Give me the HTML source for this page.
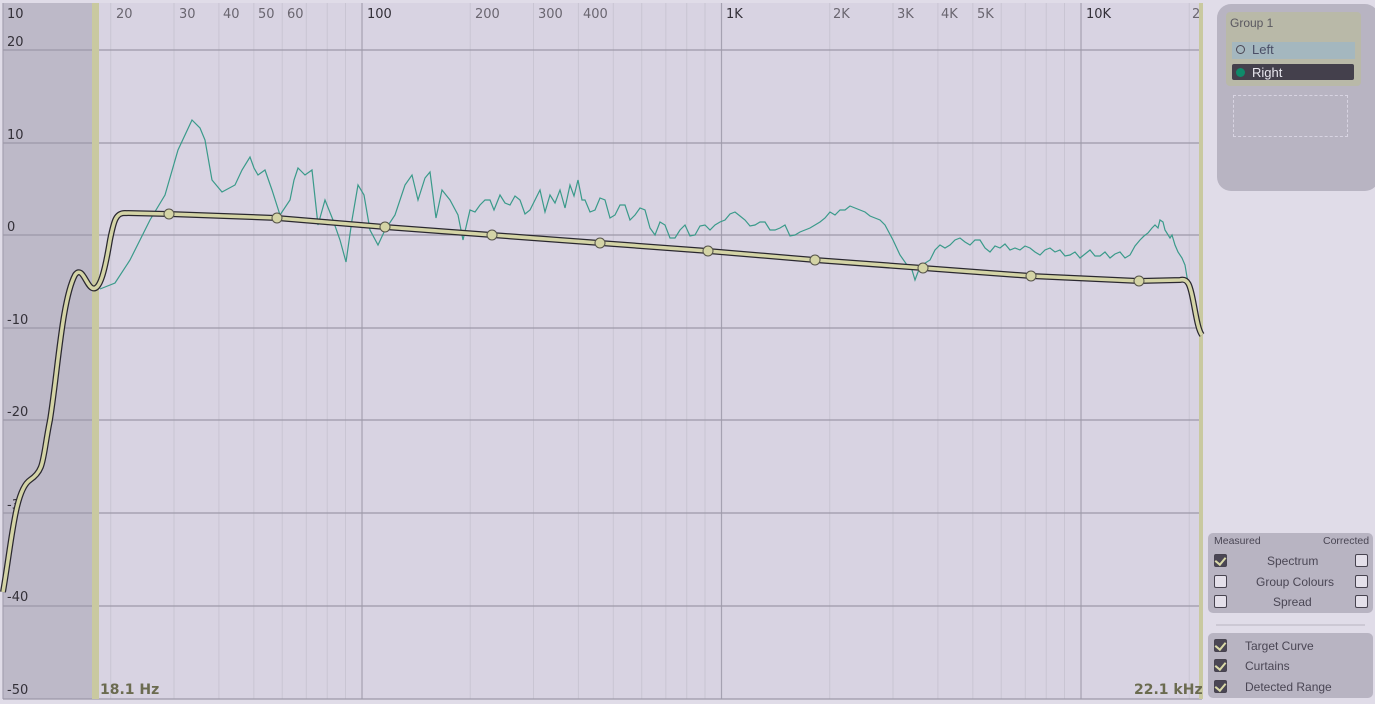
<!DOCTYPE html>
<html><head><meta charset="utf-8"><style>
body{margin:0;width:1375px;height:704px;background:#e0dce8;overflow:hidden;position:relative;font-family:"DejaVu Sans","Liberation Sans",sans-serif}
.p{position:absolute}
.cb{position:absolute;width:13px;height:13px;border:1px solid #47434f;background:#e4e0ea;border-radius:2px;box-sizing:border-box}
.cb.on{background:#4a4654}
.cb.on:after{content:"";position:absolute;left:2px;top:0px;width:5px;height:8px;border-right:2px solid #d9d9a8;border-bottom:2px solid #d9d9a8;transform:rotate(40deg)}
.t{position:absolute;font-size:12px;color:#4a4654;font-family:"Liberation Sans",sans-serif}
</style></head><body>
<svg class="p" style="left:0;top:0" width="1210" height="704">
<rect x="3" y="3" width="1199" height="696" fill="#d8d3e2"/>
<rect x="3" y="3" width="89" height="696" fill="#bdb9c8"/>
<g stroke="#c9c5d3" stroke-width="1">
<path d="M110.7 3V699M174 3V699M218.9 3V699M253.8 3V699M282.2 3V699M306.3 3V699M327.2 3V699M345.5 3V699M470.2 3V699M533.5 3V699M578.4 3V699M613.3 3V699M641.7 3V699M665.8 3V699M686.7 3V699M705 3V699M829.7 3V699M893 3V699M937.9 3V699M972.8 3V699M1001.2 3V699M1025.3 3V699M1046.2 3V699M1064.5 3V699M1189.2 3V699"/>
</g>
<g stroke="#a5a1b1" stroke-width="1.2"><path d="M362 3V699M721.5 3V699M1081 3V699M3 3V699"/></g>
<g stroke="#9d99a8" stroke-width="1.2"><path d="M3 50H1202M3 143H1202M3 235H1202M3 328H1202M3 420H1202M3 513H1202M3 606H1202M3 699H1202"/></g>
<rect x="92" y="3" width="7" height="696" fill="#c9c9a0"/>
<rect x="1199" y="3" width="4" height="696" fill="#c9c9a0"/>
<g font-size="13" fill="#6a6670">
<text x="116" y="18">20</text><text x="179" y="18">30</text><text x="223" y="18">40</text><text x="258" y="18">50</text><text x="287" y="18">60</text>
<text x="475" y="18">200</text><text x="538" y="18">300</text><text x="583" y="18">400</text>
<text x="833" y="18">2K</text><text x="897" y="18">3K</text><text x="941" y="18">4K</text><text x="977" y="18">5K</text><text x="1192" y="18">2</text>
</g>
<g font-size="13" fill="#333038">
<text x="7" y="18">10</text><text x="367" y="18">100</text><text x="726" y="18">1K</text><text x="1086" y="18">10K</text>
<text x="7" y="46">20</text><text x="7" y="139">10</text><text x="7" y="231">0</text><text x="7" y="324">-10</text><text x="7" y="416">-20</text><text x="7" y="509">-3</text><text x="7" y="601">-40</text><text x="7" y="694">-50</text>
</g>
<text x="100" y="694" font-size="14" font-weight="bold" fill="#6b6b50">18.1 Hz</text>
<text x="1134" y="694" font-size="14" font-weight="bold" fill="#6b6b50">22.1 kHz</text>
<polyline fill="none" stroke="#3a9a8a" stroke-width="1.2" points="100,289 115,283 130,260 150,220 165,195 178,150 192,120 200,128 205,140 212,180 222,192 235,185 242,170 250,157 254,168 258,175 265,170 272,190 280,215 290,200 294,180 298,168 305,175 312,170 318,225 325,200 333,220 340,240 346,262 352,220 358,185 364,195 370,230 378,245 385,230 395,215 405,185 412,175 418,200 425,178 430,172 436,218 442,190 450,200 458,215 463,240 470,210 475,212 480,205 485,200 490,200 494,210 500,195 505,203 510,205 515,196 520,200 525,214 530,210 535,200 540,190 545,212 550,195 555,203 560,190 565,208 570,185 574,196 578,180 582,200 585,200 590,212 595,210 600,198 605,200 610,218 615,215 620,205 625,205 630,220 635,215 640,208 645,210 650,228 655,235 660,222 665,225 670,238 675,238 680,230 685,225 690,236 695,235 700,226 705,225 710,230 715,225 720,222 725,220 730,214 735,212 740,216 745,220 750,226 755,225 760,222 765,222 770,230 775,230 780,228 785,225 790,236 795,235 800,232 805,230 810,228 815,225 820,222 825,218 830,212 835,215 840,210 845,210 850,206 855,208 860,210 865,212 870,216 875,218 880,220 885,225 893,240 900,255 907,265 912,270 915,280 918,272 922,265 930,260 935,250 940,245 945,248 950,245 955,240 960,238 965,242 970,245 975,240 980,240 985,248 990,252 995,246 1000,248 1005,244 1010,250 1015,248 1020,250 1025,246 1030,248 1035,252 1040,255 1045,250 1050,248 1055,252 1060,250 1065,256 1070,255 1075,252 1080,258 1085,254 1090,250 1095,256 1100,256 1105,252 1110,258 1115,254 1120,252 1125,258 1130,255 1135,246 1140,240 1144,236 1148,233 1152,228 1155,225 1158,228 1160,220 1163,222 1165,230 1170,238 1172,235 1175,245 1178,252 1182,258 1185,265 1190,295"/>
<path id="tc" fill="none" d="M3 592C12 540 15 490 30 480C45 470 42 460 50 420C58 370 62 300 75 275C82 265 86 285 92 288C100 292 105 270 110 240C114 220 116 213 125 213L169 214L277 218L385 227L492 235L600 243L708 251L815 260L923 268L1031 276L1139 281L1180 280C1188 278 1190 285 1193 300C1196 315 1198 330 1202 335"/>
<use href="#tc" stroke="#2a2830" stroke-width="6"/>
<use href="#tc" stroke="#d4d4a6" stroke-width="3.5"/>
<g fill="#d4d4a6" stroke="#55534a" stroke-width="1">
<circle cx="169" cy="214" r="5"/><circle cx="277" cy="218" r="5"/><circle cx="385" cy="227" r="5"/><circle cx="492" cy="235" r="5"/><circle cx="600" cy="243" r="5"/><circle cx="708" cy="251" r="5"/><circle cx="815" cy="260" r="5"/><circle cx="923" cy="268" r="5"/><circle cx="1031" cy="276" r="5"/><circle cx="1139" cy="281" r="5"/>
</g>
</svg>
<div class="p" style="left:1217px;top:4px;width:162px;height:187px;background:#b8b4c2;border-radius:14px"></div>
<div class="p" style="left:1226px;top:12px;width:135px;height:74px;background:#b9b9a8;border-radius:4px"></div>
<div class="t" style="left:1230px;top:16px;font-size:12px;color:#5a5860">Group 1</div>
<div class="p" style="left:1232px;top:42px;width:123px;height:17px;background:#a4b7bf"></div>
<div class="p" style="left:1236px;top:45px;width:7px;height:7px;border:1.5px solid #4a4654;border-radius:50%"></div>
<div class="t" style="left:1252px;top:42px;font-size:13px;color:#4a4e66">Left</div>
<div class="p" style="left:1232px;top:64px;width:122px;height:16px;background:#44404c;border-radius:2px"></div>
<div class="p" style="left:1236px;top:68px;width:9px;height:9px;background:#0f8a6a;border-radius:50%"></div>
<div class="t" style="left:1252px;top:65px;font-size:13px;color:#e8e6ee">Right</div>
<div class="p" style="left:1233px;top:95px;width:115px;height:42px;border:1.5px dashed #d8d4e2;box-sizing:border-box"></div>
<div class="p" style="left:1208px;top:533px;width:165px;height:80px;background:#b8b4c2;border-radius:5px"></div>
<div class="t" style="left:1214px;top:535px;font-size:10.5px">Measured</div>
<div class="t" style="left:1323px;top:535px;font-size:10.5px">Corrected</div>
<div class="cb on" style="left:1214px;top:554px"></div><div class="t" style="left:1267px;top:554px">Spectrum</div><div class="cb" style="left:1355px;top:554px"></div>
<div class="cb" style="left:1214px;top:575px"></div><div class="t" style="left:1256px;top:575px">Group Colours</div><div class="cb" style="left:1355px;top:575px"></div>
<div class="cb" style="left:1214px;top:595px"></div><div class="t" style="left:1273px;top:595px">Spread</div><div class="cb" style="left:1355px;top:595px"></div>
<div class="p" style="left:1216px;top:624px;width:149px;height:2px;background:#ccc8d4"></div>
<div class="p" style="left:1208px;top:633px;width:165px;height:65px;background:#b8b4c2;border-radius:5px"></div>
<div class="cb on" style="left:1214px;top:639px"></div><div class="t" style="left:1245px;top:639px">Target Curve</div>
<div class="cb on" style="left:1214px;top:659px"></div><div class="t" style="left:1245px;top:659px">Curtains</div>
<div class="cb on" style="left:1214px;top:680px"></div><div class="t" style="left:1245px;top:680px">Detected Range</div>
</body></html>
